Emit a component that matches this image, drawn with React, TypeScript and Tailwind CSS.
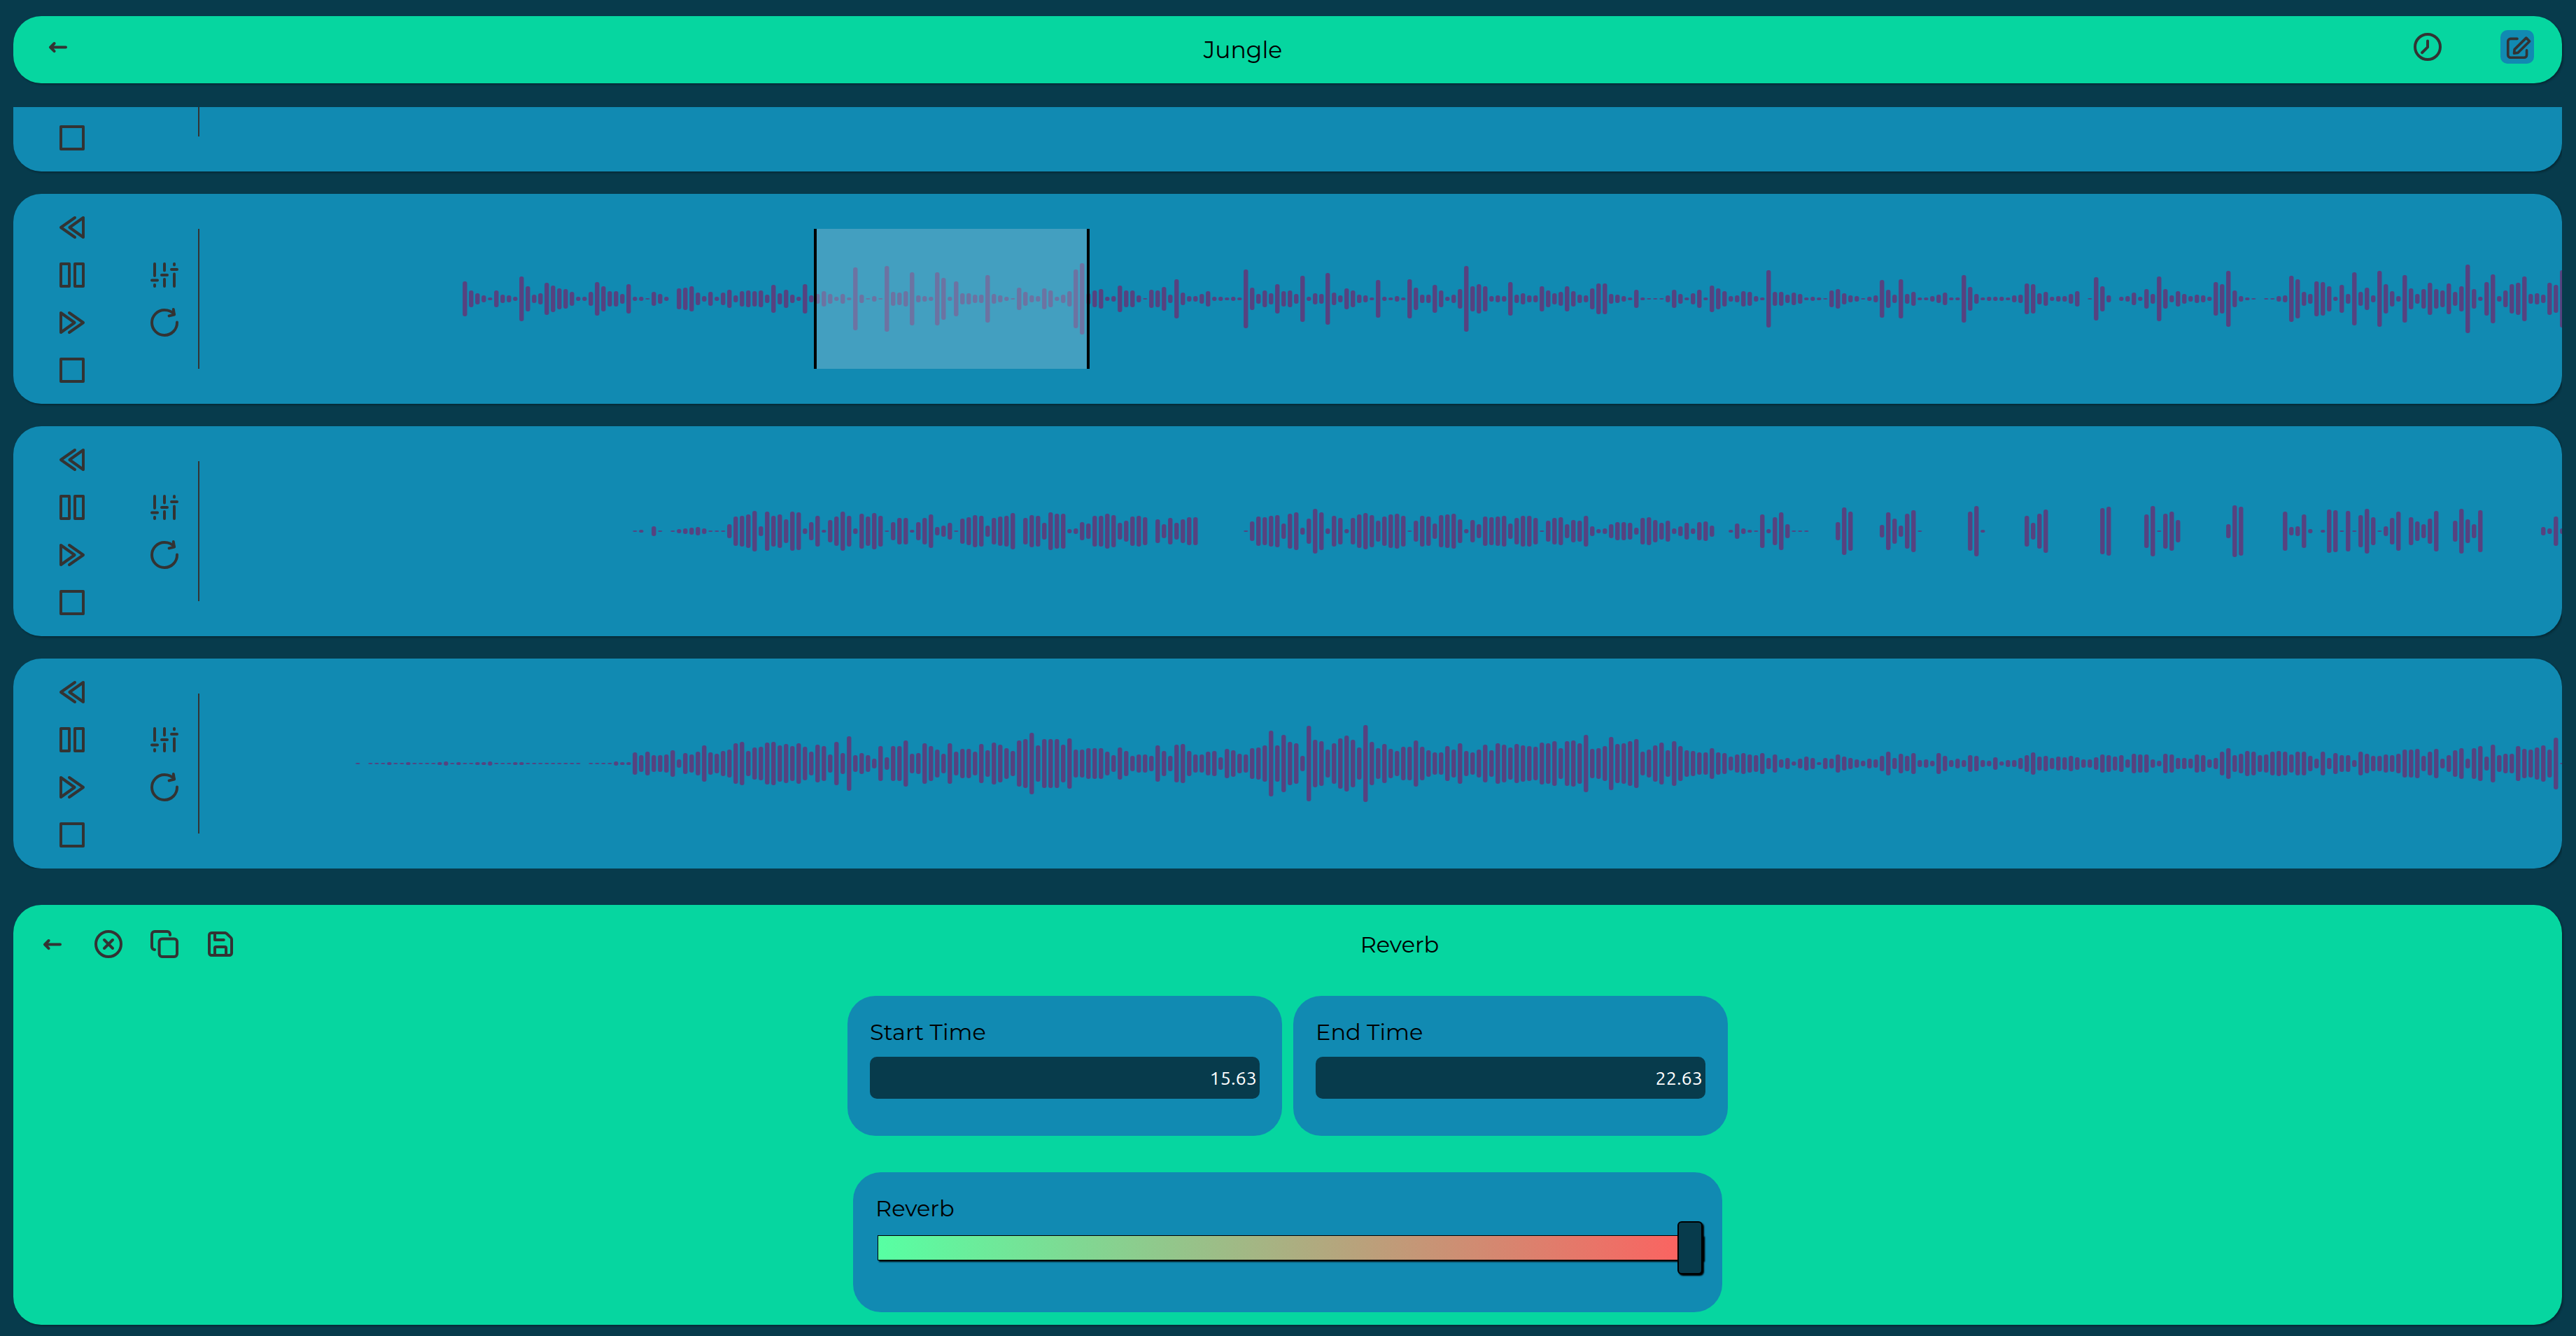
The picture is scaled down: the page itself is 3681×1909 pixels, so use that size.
import type { ReactNode } from "react";

type Region = { start: number; end: number };
type TrackData = { name: string; firstSlot: number; peaks: number[]; region?: Region };

const BAR_PITCH = 9;
const BAR_WIDTH = 6.4;
const PIXELS_PER_SECOND = 56;

const parse = (text: string) => text.trim().split(/\s+/).map(Number);

const drums = parse(`
25 12 8 5 2 12 6 5 3 32 18 6 8 23 19 15 14 10 3 3 10 24 18 11 11 7 21 3 3 1 10 7 3 0
15 16 18 9 4 10 3 9 13 5 11 12 11 12 6 20 8 13 6 3 21 5 7 11 7 3 7 2 45 6 1 4 1 47
10 9 11 38 5 4 3 38 30 3 25 8 8 6 6 34 7 5 3 1 16 10 5 4 15 12 3 6 11 42 51 8 12 14 3 4
19 12 12 5 1 13 12 17 6 28 9 4 4 7 11 3 3 2 3 2 42 16 7 12 8 21 11 12 7 33 3 8 7 37
9 5 15 12 6 5 2 27 3 2 4 2 28 16 6 6 20 12 3 6 14 47 18 21 18 4 5 4 24 6 8 5 5 18
12 8 10 18 11 6 5 15 22 22 7 6 4 2 13 2 1 1 1 5 13 7 2 8 13 2 19 15 11 4 5 11 10 4 2 41
10 10 6 9 7 2 3 2 1 12 14 8 5 4 1 3 5 27 13 6 28 7 10 2 2 4 6 9 2 2 34 17 7 2 3 3 3 2 5 6
22 21 8 10 3 4 4 7 11 0 1 31 18 5 0 3 4 9 3 14 7 32 14 5 11 7 4 6 5 3 24 21 40 12 4 2 1 0
1 1 4 5 33 28 10 7 25 24 18 3 20 7 38 10 16 5 40 21 11 4 34 15 7 14 23 14 12 22 10 18 49
14 3 24 35 4 12 21 23 32 7 8 6 23 20 41
`);

const bass = parse(`
1 2 0 7 1 0 1 3 4 5 6 4 1 1 1 10 21 22 24 29 7 28 22 24 17 28 27 4 13 22 2 16 21 28 22 4
25 21 26 22 1 13 19 19 2 13 19 24 6 8 12 1 18 20 23 22 8 19 21 22 26 0 19 23 22 12 27 25 25
3 4 13 11 22 22 25 23 12 15 21 22 20 0 17 10 19 12 17 20 20 0 0 0 0 0 0 0
1 14 21 20 22 23 11 25 27 5 18 32 27 4 22 19 3 19 24 26 23 15 21 24 25 22 1 15 22 21 11 23
24 25 17 3 16 10 21 20 21 22 11 19 22 22 19 1 15 19 20 10 16 15 22 7
3 4 10 13 13 12 5 19 20 16 12 15 4 7 12 4 13 14 8 0 0 2 11 4 2 1 24 3 20 27 10 1 1 1 0 0 0 0
13 34 28 0 0 0 0 9 27 18 8 25 30 1 0 0 0 0 0 0 0 28 36 2 0 0 0 0 0 0 22 12 25 31
0 0 0 0 0 0 0 0 33 35 0 0 0 0 0 24 36 1 25 28 16 0 0 0 0 0 0 0 10 37 35 0 0 0 0 0 0
28 6 7 24 3 0 2 31 30 1 29 1 23 32 20 1 7 19 28 0 20 14 10 18 29 0 0 15 32 17 10 30
0 0 0 0 0 0 0 0 0 6 4 21 4
`);

const pads = parse(`
1 0 1 1 1 2 1 1 2 1 1 1 1 2 3 1 2 1 1 2 2 3 1 1 1 2 2 1 1 1 1 1 1 1 1 1 0 1 1 1 1 3 2 2
16 12 17 12 12 13 19 6 15 13 17 26 16 14 18 20 29 31 18 23 24 30 31 26 28 25 29 24 17 27 25 13
31 15 39 12 15 12 7 25 9 25 25 33 14 15 29 25 20 14 29 17 21 21 17 28 19 30 27 22 18 33 35 44
26 35 35 35 27 36 20 20 22 22 22 17 12 23 18 11 13 13 11 26 18 11 27 28 18 13 13 17 18 9 21 19
14 13 22 23 26 47 26 41 31 29 11 54 34 32 20 29 36 40 34 23 55 31 22 28 21 18 24 24 33 24 19 16
16 25 20 29 18 16 20 27 19 29 27 23 28 26 25 24 30 29 32 22 32 33 29 41 21 22 25 38 28 29 32 35
17 20 26 30 19 32 25 19 18 16 16 22 16 15 10 13 15 13 12 15 8 13 6 8 3 7 10 8 2 8 7 13 10 8 6 4
7 6 11 17 8 14 11 15 5 6 4 15 11 5 7 5 12 11 5 4 9 3 5 5 8 12 16 10 11 8 10 9 11 9 6 6 9 13 12
10 12 6 14 13 13 6 4 14 13 8 8 7 13 12 6 8 17 22 12 14 18 17 12 13 17 18 17 13 17 17 11 7 17 8
15 12 12 5 17 14 11 11 13 12 14 20 20 21 11 17 21 7 12 19 22 7 22 25 10 27 12 14 14 25 21 20 23
26 20 37 1
`);

const tracks: TrackData[] = [
  { name: "Vocals", firstSlot: 42, peaks: [] },
  { name: "Drums", firstSlot: 42, peaks: drums, region: { start: 15.68, end: 22.71 } },
  { name: "Bass", firstSlot: 69, peaks: bass },
  { name: "Pads", firstSlot: 25, peaks: pads },
];

function Icon({ children }: { children: ReactNode }) {
  return (
    <svg
      viewBox="0 0 24 24"
      className="size-12"
      fill="none"
      stroke="#333333"
      strokeWidth="2"
      strokeLinecap="round"
      strokeLinejoin="round"
      aria-hidden="true"
    >
      {children}
    </svg>
  );
}

const BackIcon = () => (
  <Icon>
    <path d="M17.5 12.3h-11m0 0L9.3 9.5M6.5 12.3l2.8 2.8" />
  </Icon>
);

const ClockIcon = () => (
  <Icon>
    <circle cx="12" cy="12" r="9" />
    <path d="M12 7.8v4.4l-4 3.9" />
  </Icon>
);

const EditIcon = () => (
  <Icon>
    <path d="M12 5.7H6.8a2 2 0 0 0-2 2v10.6a2 2 0 0 0 2 2h10.6a2 2 0 0 0 2-2v-3.6" />
    <path d="M9.6 17l.3-3L19 5l2.6 2.6-9.1 9z" />
  </Icon>
);

const RewindIcon = () => (
  <Icon>
    <path d="M14 5L4 12l10 7M20 5v14l-9.8-7z" />
  </Icon>
);

const ForwardIcon = () => (
  <Icon>
    <path d="M10 5l10 7-10 7M4 5v14l9.8-7z" />
  </Icon>
);

const PauseIcon = () => (
  <Icon>
    <path d="M4 4h6v16H4zM14 4h6v16h-6z" />
  </Icon>
);

const StopIcon = () => (
  <Icon>
    <path d="M4 4h16v16H4z" />
  </Icon>
);

const SlidersIcon = () => (
  <Icon>
    <path d="M5 4v8.5M3 15.8h4M5 19v1M12 4v4.8M10 12h4M12 15v5M19 4v.8M17 8h4M19 11.2V20" />
  </Icon>
);

const ReloadIcon = () => (
  <Icon>
    <path d="M21 11.8a9 9 0 1 1-9-8.8c2.8 0 5.3 1.1 7 3" />
    <path d="M18.4 2.5l.6 3.8-3.7.9" />
  </Icon>
);

const RemoveIcon = () => (
  <Icon>
    <circle cx="12" cy="12" r="9" />
    <path d="M9 9l6 6M15 9l-6 6" />
  </Icon>
);

const CopyIcon = () => (
  <Icon>
    <path d="M5 16a2 2 0 0 1-2-2V5a2 2 0 0 1 2-2h9a2 2 0 0 1 2 2v.5" />
    <rect x="8.3" y="8.3" width="12.7" height="12.7" rx="2" />
  </Icon>
);

const SaveIcon = () => (
  <Icon>
    <path d="M4 18.4V5.6C4 4.7 4.7 4 5.6 4h9.6c.4 0 .8.2 1.1.4l3.1 2.9c.4.4.6.8.6 1.3v9.8c0 .9-.7 1.6-1.6 1.6H5.6C4.7 20 4 19.3 4 18.4z" />
    <path d="M8 4v5h6.4M8 20v-5.2c0-.4.3-.8.8-.8h6.4c.5 0 .8.4.8.8V20" />
  </Icon>
);

function IconButton({ label, active, children }: { label: string; active?: boolean; children: ReactNode }) {
  return (
    <button
      type="button"
      aria-label={label}
      className={active ? "size-12 cursor-pointer rounded-[10px] bg-[#118ab2] p-0.5 [&>svg]:size-11" : "size-12 cursor-pointer"}
    >
      {children}
    </button>
  );
}

function Waveform({ firstSlot, peaks, region }: TrackData) {
  return (
    <div className="relative h-[200px] min-w-0 flex-1 overflow-hidden border-l-2 border-[#333333]">
      <svg className="h-full w-full" fill="#564280" aria-hidden="true">
        {peaks.map((peak, i) =>
          peak === 0 ? null : (
            <rect
              key={i}
              x={(firstSlot + i) * BAR_PITCH - 1.9}
              y={100 - peak}
              width={BAR_WIDTH}
              height={peak * 2}
              rx={3}
            />
          ),
        )}
      </svg>
      {region && (
        <div
          className="absolute inset-y-0 border-x-4 border-black bg-[#8ebed5]/40"
          style={{
            left: Math.round(region.start * PIXELS_PER_SECOND),
            width: Math.round((region.end - region.start) * PIXELS_PER_SECOND),
          }}
        />
      )}
    </div>
  );
}

function Track(props: TrackData) {
  return (
    <section
      aria-label={props.name}
      className="flex h-[300px] shrink-0 items-center overflow-hidden rounded-[40px] bg-[#118ab2] pl-[60px] shadow-[2px_2px_3px_rgba(0,0,0,0.3)]"
    >
      <div className="flex flex-col gap-5">
        <IconButton label="Rewind"><RewindIcon /></IconButton>
        <IconButton label="Pause"><PauseIcon /></IconButton>
        <IconButton label="Forward"><ForwardIcon /></IconButton>
        <IconButton label="Stop"><StopIcon /></IconButton>
      </div>
      <div className="mr-6 ml-[84px] flex flex-col gap-5">
        <IconButton label="Effects"><SlidersIcon /></IconButton>
        <IconButton label="Reload"><ReloadIcon /></IconButton>
      </div>
      <Waveform {...props} />
    </section>
  );
}

function TimeField({ id, label, value }: { id: string; label: string; value: string }) {
  return (
    <div className="h-[200px] w-[621px] rounded-[40px] bg-[#118ab2] px-8 pt-8">
      <label htmlFor={id} className="mb-[15px] block">{label}</label>
      <input
        id={id}
        type="text"
        inputMode="decimal"
        defaultValue={value}
        className="block h-[60px] w-full rounded-[10px] bg-[#073b4c] px-1 text-right font-['Ubuntu','Noto_Sans',sans-serif] text-[27px] text-white"
      />
    </div>
  );
}

export default function App() {
  return (
    <div className="flex h-screen flex-col overflow-hidden bg-[#073b4c] pt-[23px] pr-5 pb-4 pl-[19px] font-['Montserrat','Inter',sans-serif] text-[32px] leading-10 text-black">
      <header className="flex h-24 shrink-0 items-center rounded-[40px] bg-[#06d6a0] shadow-[2px_2px_3px_rgba(0,0,0,0.3)]">
        <div className="flex w-32 justify-center pb-2">
          <IconButton label="Back"><BackIcon /></IconButton>
        </div>
        <h1 className="flex-1 text-center text-[33px]">Jungle</h1>
        <div className="flex w-32 justify-center pb-2">
          <IconButton label="History"><ClockIcon /></IconButton>
        </div>
        <div className="flex w-32 justify-center pb-2">
          <IconButton label="Edit" active><EditIcon /></IconButton>
        </div>
      </header>

      <main className="mt-[34px] flex min-h-0 flex-1 flex-col justify-end gap-8 overflow-hidden">
        {tracks.map((track) => (
          <Track key={track.name} {...track} />
        ))}
      </main>

      <section
        aria-label="Effect settings"
        className="mt-[52px] shrink-0 rounded-[40px] bg-[#06d6a0] pb-[18px] shadow-[2px_2px_3px_rgba(0,0,0,0.3)]"
      >
        <div className="mb-[18px] flex h-28 items-center pl-8">
          <div className="flex gap-8">
            <IconButton label="Back"><BackIcon /></IconButton>
            <IconButton label="Remove"><RemoveIcon /></IconButton>
            <IconButton label="Copy"><CopyIcon /></IconButton>
            <IconButton label="Save"><SaveIcon /></IconButton>
          </div>
          <h2 className="flex-1 pt-0.5 text-center">Reverb</h2>
        </div>
        <div className="flex justify-center gap-4">
          <TimeField id="start-time" label="Start Time" value="15.63" />
          <TimeField id="end-time" label="End Time" value="22.63" />
        </div>
        <div className="mx-auto mt-[52px] h-[200px] w-[1242px] rounded-[40px] bg-[#118ab2] pt-8 pr-[27px] pl-8">
          <label htmlFor="reverb" className="mb-[18px] block">Reverb</label>
          <div className="pl-[3px]">
            <input
              id="reverb"
              type="range"
              min={0}
              max={100}
              defaultValue={100}
              className="block h-9 w-full appearance-none bg-transparent [&::-webkit-slider-runnable-track]:h-9 [&::-webkit-slider-runnable-track]:border [&::-webkit-slider-runnable-track]:border-black [&::-webkit-slider-runnable-track]:bg-linear-to-r/srgb [&::-webkit-slider-runnable-track]:from-[#57ffa3] [&::-webkit-slider-runnable-track]:to-[#ff5f5f] [&::-webkit-slider-runnable-track]:shadow-[2px_2px_2px_#000] [&::-webkit-slider-thumb]:-mt-[21px] [&::-webkit-slider-thumb]:h-[76px] [&::-webkit-slider-thumb]:w-9 [&::-webkit-slider-thumb]:appearance-none [&::-webkit-slider-thumb]:rounded-[6px] [&::-webkit-slider-thumb]:border-2 [&::-webkit-slider-thumb]:border-black [&::-webkit-slider-thumb]:bg-[#073b4c] [&::-webkit-slider-thumb]:shadow-[2px_2px_2px_#000]"
            />
          </div>
        </div>
      </section>
    </div>
  );
}
